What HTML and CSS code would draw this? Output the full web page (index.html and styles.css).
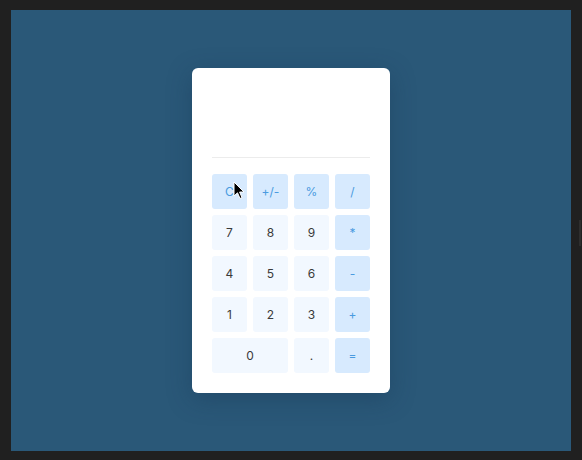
FILE: index.html
```html
<!DOCTYPE html>
<html>
<head>
<meta charset="utf-8">
<link rel="stylesheet" href="styles.css">
</head>
<body>
<div class="frame">
  <div class="stage">
    <div class="calc">
      <div class="display"></div>
      <div class="keys">
        <div class="key op">C
          <svg class="cursor" width="12" height="19" viewBox="0 0 12 19"><path d="M1 1 L1 15 L4.5 11.8 L7 17.5 L9 16.6 L6.6 11 L11 11 Z" fill="#000" stroke="#fff" stroke-width="1"/></svg>
        </div>
        <div class="key op">+/-</div>
        <div class="key op">%</div>
        <div class="key op">/</div>
        <div class="key">7</div>
        <div class="key">8</div>
        <div class="key">9</div>
        <div class="key op">*</div>
        <div class="key">4</div>
        <div class="key">5</div>
        <div class="key">6</div>
        <div class="key op">-</div>
        <div class="key">1</div>
        <div class="key">2</div>
        <div class="key">3</div>
        <div class="key op">+</div>
        <div class="key zero">0</div>
        <div class="key">.</div>
        <div class="key op">=</div>
      </div>
    </div>
  </div>
  <div class="scroll"></div>
</div>
</body>
</html>
```
FILE: styles.css
```css
html, body {
  margin: 0;
  padding: 0;
  background: #202020;
}
.frame {
  width: 582px;
  height: 460px;
  box-sizing: border-box;
  padding: 10px 11px 9px 11px;
  position: relative;
}
.stage {
  width: 100%;
  height: 100%;
  background: #2a5878;
  display: flex;
  align-items: center;
  justify-content: center;
}
.calc {
  width: 198px;
  height: 325px;
  box-sizing: border-box;
  background: #ffffff;
  border-radius: 6px;
  padding: 20px;
  box-shadow: 0 6px 24px rgba(20, 50, 80, 0.35);
  display: flex;
  flex-direction: column;
}
.display {
  height: 69px;
  border-bottom: 1px solid #ececec;
  margin-bottom: 16px;
  flex: none;
}
.keys {
  display: grid;
  grid-template-columns: repeat(4, 35px);
  grid-auto-rows: 35px;
  gap: 6px;
}
.key {
  position: relative;
  background: #f2f8ff;
  border-radius: 3px;
  display: flex;
  align-items: center;
  justify-content: center;
  font-family: "Inter", "Lato", sans-serif;
  font-size: 12px;
  color: #3a3a3a;
}
.key.op {
  background: #d7eafe;
  color: #4a9be0;
}
.key.zero {
  grid-column: span 2;
}
.cursor {
  position: absolute;
  left: 21px;
  top: 7px;
}
.scroll {
  position: absolute;
  right: 1px;
  top: 220px;
  width: 2px;
  height: 26px;
  background: #2e2e2e;
}
```
